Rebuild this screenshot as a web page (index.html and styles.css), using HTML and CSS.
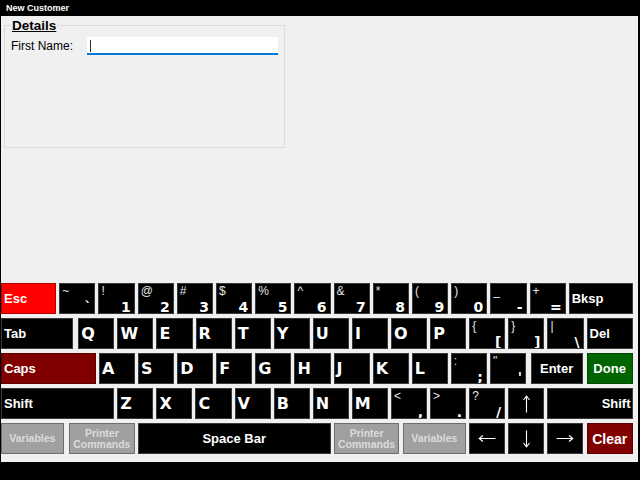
FILE: index.html
```html
<!DOCTYPE html>
<html>
<head>
<meta charset="utf-8">
<link rel="stylesheet" href="styles.css">
</head>
<body>
<div class="titlebar">New Customer</div>
<div class="window">
  <fieldset class="details">
    <legend>Details</legend>
    <div class="field">
      <span class="field-label">First Name:</span>
      <div class="input"><span class="caret"></span></div>
    </div>
  </fieldset>

  <div class="keyboard">
    <div class="row">
      <div class="key lbl esc">Esc</div>
      <div class="key dual"><span class="sh">~</span><span class="mn">`</span></div>
      <div class="key dual"><span class="sh">!</span><span class="mn">1</span></div>
      <div class="key dual"><span class="sh">@</span><span class="mn">2</span></div>
      <div class="key dual"><span class="sh">#</span><span class="mn">3</span></div>
      <div class="key dual"><span class="sh">$</span><span class="mn">4</span></div>
      <div class="key dual"><span class="sh">%</span><span class="mn">5</span></div>
      <div class="key dual"><span class="sh">^</span><span class="mn">6</span></div>
      <div class="key dual"><span class="sh">&amp;</span><span class="mn">7</span></div>
      <div class="key dual"><span class="sh">*</span><span class="mn">8</span></div>
      <div class="key dual"><span class="sh">(</span><span class="mn">9</span></div>
      <div class="key dual"><span class="sh">)</span><span class="mn">0</span></div>
      <div class="key dual"><span class="sh">_</span><span class="mn">-</span></div>
      <div class="key dual"><span class="sh">+</span><span class="mn">=</span></div>
      <div class="key lbl bksp">Bksp</div>
    </div>

    <div class="row r2">
      <div class="key lbl tab">Tab</div>
      <div class="key letter">Q</div>
      <div class="key letter">W</div>
      <div class="key letter">E</div>
      <div class="key letter">R</div>
      <div class="key letter">T</div>
      <div class="key letter">Y</div>
      <div class="key letter">U</div>
      <div class="key letter">I</div>
      <div class="key letter">O</div>
      <div class="key letter">P</div>
      <div class="key dual"><span class="sh">{</span><span class="mn">[</span></div>
      <div class="key dual"><span class="sh">}</span><span class="mn">]</span></div>
      <div class="key dual"><span class="sh">|</span><span class="mn">\</span></div>
      <div class="key lbl del">Del</div>
    </div>

    <div class="row r3">
      <div class="key lbl caps">Caps</div>
      <div class="key letter">A</div>
      <div class="key letter">S</div>
      <div class="key letter">D</div>
      <div class="key letter">F</div>
      <div class="key letter">G</div>
      <div class="key letter">H</div>
      <div class="key letter">J</div>
      <div class="key letter">K</div>
      <div class="key letter">L</div>
      <div class="key dual"><span class="sh">:</span><span class="mn">;</span></div>
      <div class="key dual"><span class="sh">"</span><span class="mn">'</span></div>
      <div class="key lbl center enter">Enter</div>
      <div class="key lbl center done">Done</div>
    </div>

    <div class="row r4">
      <div class="key lbl lshift">Shift</div>
      <div class="key letter">Z</div>
      <div class="key letter">X</div>
      <div class="key letter">C</div>
      <div class="key letter">V</div>
      <div class="key letter">B</div>
      <div class="key letter">N</div>
      <div class="key letter">M</div>
      <div class="key dual"><span class="sh">&lt;</span><span class="mn">,</span></div>
      <div class="key dual"><span class="sh">&gt;</span><span class="mn">.</span></div>
      <div class="key dual"><span class="sh">?</span><span class="mn">/</span></div>
      <div class="key arrow" title="Up"><svg width="9" height="18" viewBox="0 0 9 18"><path d="M4.5 1.5V17.5M1.5 5L4.5 1.2L7.5 5" fill="none" stroke="#fff" stroke-width="1.1"/></svg></div>
      <div class="key lbl rshift">Shift</div>
    </div>

    <div class="row r5">
      <div class="key gray var1">Variables</div>
      <div class="key gray pc1">Printer<br>Commands</div>
      <div class="key lbl center space">Space Bar</div>
      <div class="key gray pc2">Printer<br>Commands</div>
      <div class="key gray var2">Variables</div>
      <div class="key arrow a-left" title="Left"><svg width="18" height="9" viewBox="0 0 18 9"><path d="M1.5 4.5H17.5M5 1.5L1.2 4.5L5 7.5" fill="none" stroke="#fff" stroke-width="1.1"/></svg></div>
      <div class="key arrow a-down" title="Down"><svg width="9" height="18" viewBox="0 0 9 18"><path d="M4.5 0.5V16.5M1.5 13L4.5 16.8L7.5 13" fill="none" stroke="#fff" stroke-width="1.1"/></svg></div>
      <div class="key arrow" title="Right"><svg width="18" height="9" viewBox="0 0 18 9"><path d="M0.5 4.5H16.5M13 1.5L16.8 4.5L13 7.5" fill="none" stroke="#fff" stroke-width="1.1"/></svg></div>
      <div class="key lbl center clear">Clear</div>
    </div>
  </div>
</div>
</body>
</html>
```

FILE: styles.css
```css
html, body {
  margin: 0;
  padding: 0;
  background: #000;
  width: 640px;
  height: 480px;
  overflow: hidden;
  font-family: "Liberation Sans", Arial, sans-serif;
}

.titlebar {
  height: 16px;
  box-sizing: border-box;
  padding: 3px 0 0 6px;
  color: #fff;
  font-size: 9px;
  font-weight: bold;
  line-height: 10px;
}

.window {
  height: 446px;
  margin: 0 2px 0 1px;
  background: #f0f0f0;
  display: flex;
  flex-direction: column;
}

.details {
  margin: 2px 0 0 3px;
  width: 281px;
  height: 130px;
  box-sizing: border-box;
  border: 1px solid #dcdcdc;
  padding: 0;
}

.details legend {
  margin-left: 6px;
  padding: 0 1px;
  font-size: 13.5px;
  font-weight: bold;
  text-decoration: underline;
  color: #000;
  line-height: 15px;
}

.field {
  display: flex;
  align-items: center;
  margin-top: 4px;
}

.field-label {
  width: 76px;
  padding-left: 6px;
  font-size: 12px;
  color: #000;
}

.input {
  width: 191px;
  height: 18px;
  box-sizing: border-box;
  background: #fff;
  border-bottom: 2px solid #0078d7;
  padding: 3px 0 0 3px;
}

.caret {
  display: block;
  width: 1px;
  height: 12px;
  background: #333;
}

.keyboard {
  margin-top: auto;
  padding-bottom: 8px;
  display: flex;
  flex-direction: column;
  gap: 4px;
}

.row {
  display: flex;
  gap: 3px;
  height: 31px;
}

.key {
  flex: none;
  width: 36.2px;
  box-sizing: border-box;
  border: 1px solid #3a3a3a;
  background: #000;
  color: #fff;
  overflow: hidden;
}

.r2 .key, .r3 .key, .r4 .key { width: 36.1px; }

.lbl {
  display: flex;
  align-items: center;
  padding-left: 2px;
  font-size: 13px;
  font-weight: bold;
}

.center { justify-content: center; padding-left: 0; }

.letter {
  display: flex;
  align-items: center;
  padding-left: 2px;
  font-family: "DejaVu Sans", sans-serif;
  font-size: 16px;
  font-weight: bold;
}

.dual {
  display: flex;
  flex-direction: column;
  justify-content: space-between;
}

.dual .sh {
  align-self: flex-start;
  padding: 1px 0 0 2px;
  font-size: 12px;
  line-height: 12px;
  color: #e6e6e6;
}

.dual .mn {
  align-self: flex-end;
  padding-right: 3px;
  font-family: "DejaVu Sans", sans-serif;
  font-size: 14px;
  font-weight: bold;
  line-height: 11px;
}

.arrow {
  display: flex;
  align-items: center;
  justify-content: center;
}

.arrow svg { display: block; }

.gray {
  display: flex;
  align-items: center;
  justify-content: center;
  text-align: center;
  background: #a0a0a0;
  border: 1px solid #6e6e6e;
  color: #dcdcdc;
  font-size: 10.5px;
  font-weight: bold;
  line-height: 11px;
}

.esc { width: 55.3px; background: #ff0000; border-color: #b00000; }
.row .bksp { width: 63.8px; }

.row .tab { width: 72px; margin-right: 2.3px; }
.row .del { width: 46px; }

.row .caps { width: 94.7px; margin-right: 0.3px; background: #800000; border-color: #600000; }
.row .enter { width: 52px; margin-left: 1.6px; }
.row .done { width: 46px; margin-left: 1px; background: #006400; border-color: #004a00; }

.row .lshift { width: 113px; margin-right: 0.3px; }
.row .rshift { width: 85.3px; justify-content: flex-end; padding-left: 0; padding-right: 1px; }

.row .var1 { width: 62.7px; margin-right: 2px; }
.row .pc1 { width: 66.3px; margin-right: -0.3px; }
.row .space { width: 193px; margin-right: 0.3px; }
.row .pc2 { width: 65.3px; margin-right: 0.7px; }
.row .var2 { width: 62.7px; margin-right: 0.3px; }
.row .arrow { width: 36px; }
.row .a-left { margin-right: 0.3px; }
.row .clear { width: 46px; margin-left: 0.4px; background: #800000; border-color: #600000; font-size: 14px; }
```
